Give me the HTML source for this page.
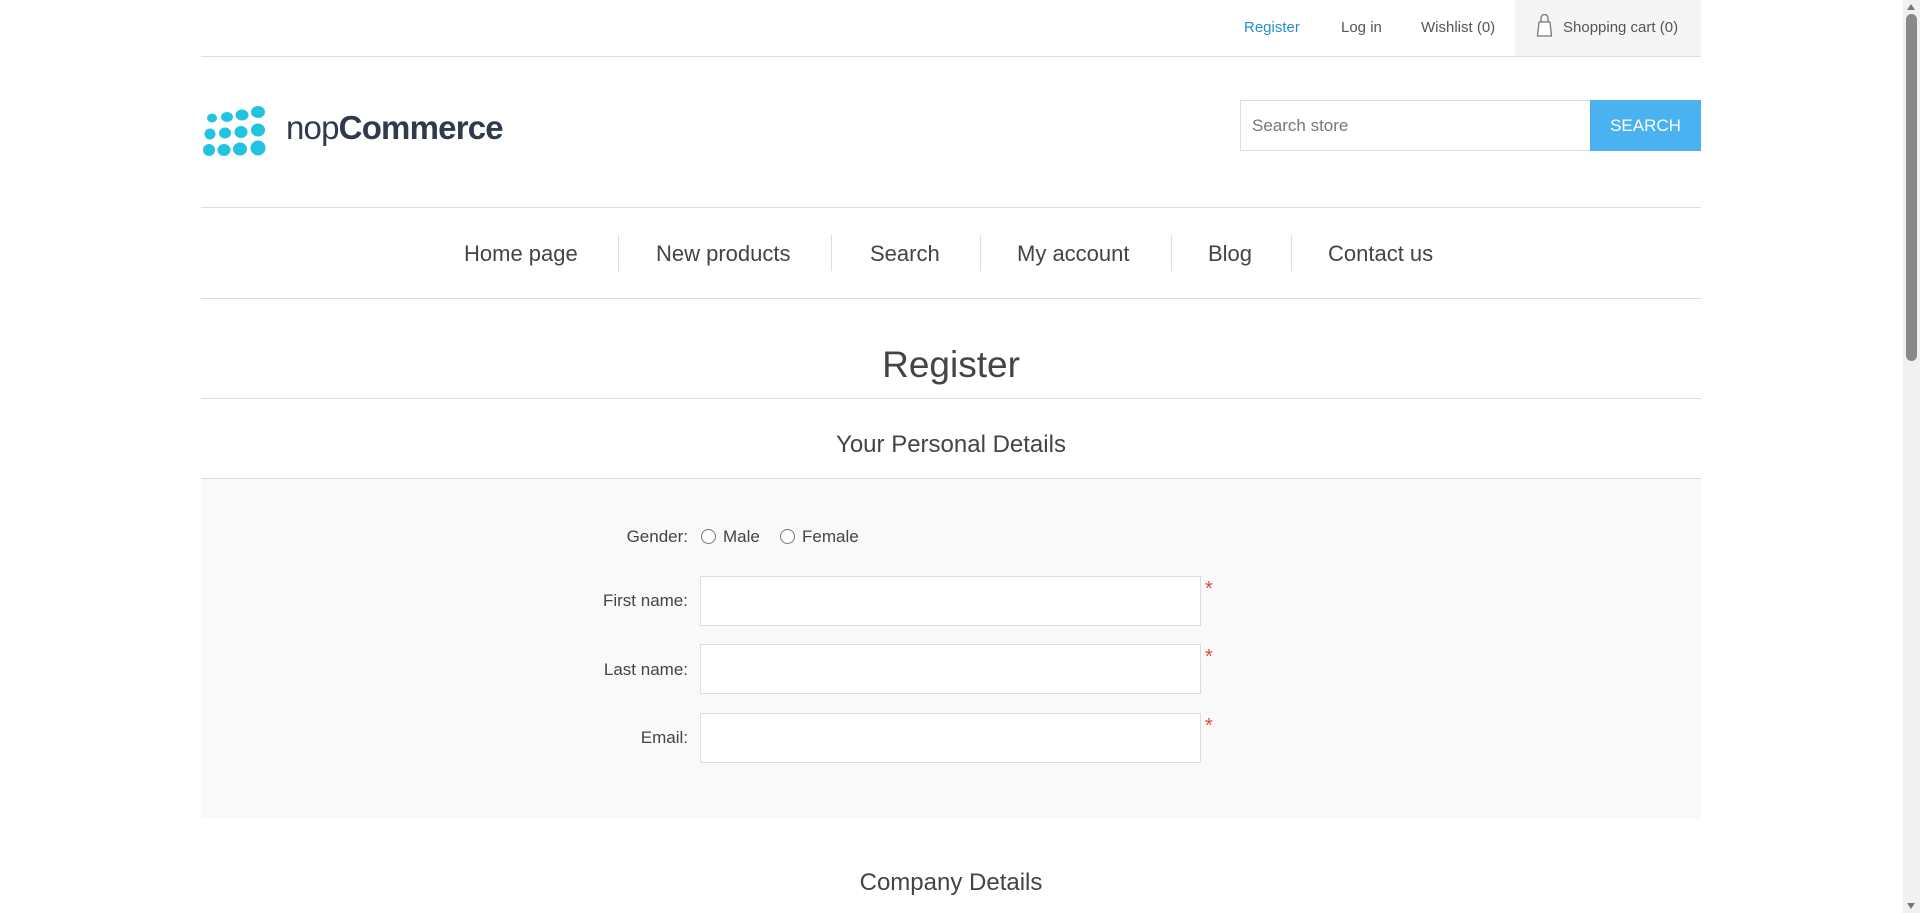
<!DOCTYPE html>
<html><head><meta charset="utf-8"><style>
*{box-sizing:border-box;margin:0;padding:0}
html,body{width:1920px;height:913px;overflow:hidden;background:#fff;font-family:"Liberation Sans",Arial,sans-serif;color:#444}
.a{position:absolute}
.sb{position:absolute;right:0;top:0;width:17px;height:913px;background:#f1f1f1}
.hl{position:absolute;left:201px;width:1500px;height:1px;background:#ddd}
.tl{position:absolute;top:19px;font-size:15px;color:#555;line-height:18px}
.nav{position:absolute;top:242px;font-size:22px;color:#444;line-height:24px}
.sep{position:absolute;top:235px;width:1px;height:36px;background:#ddd}
.lbl{position:absolute;right:1232px;font-size:17px;color:#444;text-align:right;white-space:nowrap}
.inp{position:absolute;left:700px;width:501px;height:50px;background:#fff;border:1px solid #ddd}
.ast{position:absolute;left:1205px;color:#e4444c;font-size:20px}
.rad{position:absolute;top:529px;width:15px;height:15px;border:1px solid #777;border-radius:50%;background:#fff}
</style></head><body>
<div class="sb"><div class="a" style="left:3px;top:14px;width:11px;height:347px;background:#888;border-radius:6px"></div>
<div class="a" style="left:4px;top:4px;border-left:4.5px solid transparent;border-right:4.5px solid transparent;border-bottom:6px solid #777"></div>
<div class="a" style="left:4px;bottom:4px;border-left:4.5px solid transparent;border-right:4.5px solid transparent;border-top:6px solid #777"></div></div>

<div class="a" style="left:1515px;top:0;width:186px;height:56px;background:#f5f5f5"></div>
<div class="tl" style="left:1244px;color:#248ece">Register</div>
<div class="tl" style="left:1341px">Log in</div>
<div class="tl" style="left:1421px">Wishlist (0)</div>
<svg class="a" style="left:1536px;top:14px" width="17" height="24" viewBox="0 0 17 24"><path d="M5 8V4a3.5 3.5 0 0 1 7 0v4" fill="none" stroke="#777" stroke-width="1.3"/><path d="M3 8h11l1.5 14H1.5z" fill="#fff" stroke="#777" stroke-width="1.3" stroke-linejoin="round"/></svg>
<div class="tl" style="left:1563px">Shopping cart (0)</div>
<div class="hl" style="top:56px"></div>

<svg class="a" style="left:203px;top:104px" width="72" height="56" viewBox="0 0 72 56" preserveAspectRatio="none">
<g fill="#22c3e0">
<ellipse cx="9" cy="14" rx="5" ry="4.5"/><ellipse cx="24" cy="13" rx="6" ry="5"/><ellipse cx="39" cy="11" rx="6.5" ry="5.5"/><ellipse cx="55" cy="8" rx="7" ry="6"/>
<ellipse cx="7" cy="30" rx="5.5" ry="5.5"/><ellipse cx="22" cy="29" rx="6" ry="5.5"/><ellipse cx="38" cy="28" rx="6.5" ry="6"/><ellipse cx="55" cy="26" rx="7" ry="6.5"/>
<ellipse cx="6" cy="46" rx="6" ry="6"/><ellipse cx="21" cy="46" rx="6.5" ry="6"/><ellipse cx="37" cy="45" rx="7" ry="6.5"/><ellipse cx="55" cy="44" rx="7.5" ry="7.5"/>
</g></svg>
<div class="a" style="left:286px;top:108px;font-size:33px;color:#2f3a4c;letter-spacing:-0.8px;line-height:40px">nop<b>Commerce</b></div>

<div class="a" style="left:1240px;top:100px;width:351px;height:51px;border:1px solid #ddd;background:#fff"></div>
<div class="a" style="left:1252px;top:116px;font-size:17px;color:#777">Search store</div>
<div class="a" style="left:1590px;top:100px;width:111px;height:51px;background:#4ab2f1;color:#fff;font-size:17px;text-align:center;line-height:51px">SEARCH</div>

<div class="hl" style="top:207px"></div>
<div class="nav" style="left:464px">Home page</div>
<div class="sep" style="left:618px"></div>
<div class="nav" style="left:656px">New products</div>
<div class="sep" style="left:831px"></div>
<div class="nav" style="left:870px">Search</div>
<div class="sep" style="left:980px"></div>
<div class="nav" style="left:1017px">My account</div>
<div class="sep" style="left:1171px"></div>
<div class="nav" style="left:1208px">Blog</div>
<div class="sep" style="left:1291px"></div>
<div class="nav" style="left:1328px">Contact us</div>
<div class="hl" style="top:298px"></div>

<div class="a" style="left:201px;width:1500px;top:343px;text-align:center;font-size:37px;color:#444;line-height:44px">Register</div>
<div class="hl" style="top:398px"></div>
<div class="a" style="left:201px;width:1500px;top:431px;text-align:center;font-size:24px;color:#444;line-height:28px">Your Personal Details</div>
<div class="hl" style="top:478px"></div>
<div class="a" style="left:201px;top:479px;width:1500px;height:340px;background:#f9f9f9"></div>

<div class="lbl" style="top:527px">Gender:</div>
<div class="rad" style="left:701px"></div>
<div class="a" style="left:723px;top:527px;font-size:17px">Male</div>
<div class="rad" style="left:780px"></div>
<div class="a" style="left:802px;top:527px;font-size:17px">Female</div>

<div class="lbl" style="top:591px">First name:</div>
<div class="inp" style="top:576px"></div><div class="ast" style="top:578px">*</div>
<div class="lbl" style="top:660px">Last name:</div>
<div class="inp" style="top:644px"></div><div class="ast" style="top:646px">*</div>
<div class="lbl" style="top:728px">Email:</div>
<div class="inp" style="top:713px"></div><div class="ast" style="top:715px">*</div>

<div class="a" style="left:201px;width:1500px;top:869px;text-align:center;font-size:24px;color:#444;line-height:28px">Company Details</div>
</body></html>
